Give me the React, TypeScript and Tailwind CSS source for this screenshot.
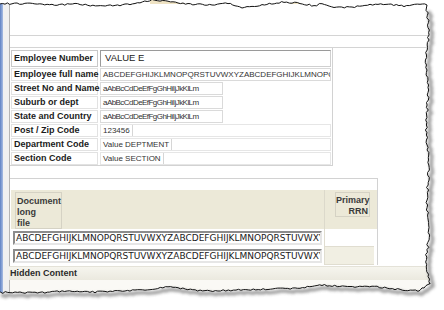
import React from "react";

type Pt = [number, number];

// seeded noise so the torn edge is the same on every render
function rng(seed: number) {
  let s = seed;
  return () => {
    s = (s * 1664525 + 1013904223) % 4294967296;
    return s / 4294967296;
  };
}

function jag(anchors: Pt[], axis: "x" | "y", amp: number, seed: number): Pt[] {
  const r = rng(seed);
  const out: Pt[] = [];
  for (let i = 0; i < anchors.length - 1; i++) {
    const [x0, y0] = anchors[i];
    const [x1, y1] = anchors[i + 1];
    const n = Math.max(1, Math.round(Math.hypot(x1 - x0, y1 - y0) / 2.5));
    for (let k = 0; k < n; k++) {
      const t = k / n;
      let x = x0 + (x1 - x0) * t;
      let y = y0 + (y1 - y0) * t;
      const j = (r() - 0.5) * amp;
      if (axis === "y") y += j;
      else x += j;
      out.push([x, y]);
    }
  }
  out.push(anchors[anchors.length - 1]);
  return out;
}

const topEdge = jag(
  [
    [-2, 3], [12, 4], [30, 3], [52, 5], [75, 4], [98, 6], [120, 5], [140, 3],
    [152, 0], [168, 1], [188, 4], [212, 5], [228, 3], [242, 8], [262, 5],
    [284, 2], [300, 3], [314, 6], [322, 3], [334, 8], [352, 7], [370, 5],
    [386, 4], [404, 6], [420, 4], [427, 5],
  ],
  "y",
  1.6,
  7,
);
const rightEdge = jag(
  [
    [427, 8], [429, 30], [426, 60], [428, 95], [426, 130], [429, 165],
    [427, 200], [429, 235], [426, 262], [430, 284],
  ],
  "x",
  2.4,
  19,
);
const bottomEdge = jag(
  [
    [430, 284], [418, 291], [395, 289], [372, 286], [350, 287], [322, 285],
    [300, 288], [268, 289], [236, 290], [205, 291], [178, 288], [168, 286],
    [150, 290], [120, 291], [95, 292], [62, 291], [35, 293], [10, 292], [-2, 293],
  ],
  "y",
  1.6,
  31,
);

const toD = (pts: Pt[]) =>
  pts.map(([x, y], i) => `${i ? "L" : "M"}${x.toFixed(1)} ${y.toFixed(1)}`).join(" ");

const paper = toD([...topEdge, ...rightEdge, ...bottomEdge]) + " Z";
const shadowLine = toD([...rightEdge, ...bottomEdge]);
const edgeLine = toD([...topEdge, ...rightEdge, ...bottomEdge]);

function TornEdge() {
  return (
    <svg className="pointer-events-none absolute inset-0" width={444} height={310}>
      <defs>
        <filter id="soft" x="-10%" y="-10%" width="120%" height="120%">
          <feGaussianBlur stdDeviation="1.8" />
        </filter>
      </defs>
      <path d={`M-5 -5H450V315H-5Z ${paper}`} fill="#ffffff" fillRule="evenodd" />
      <path
        d={shadowLine}
        transform="translate(3 3)"
        fill="none"
        stroke="#6b6b6b"
        strokeWidth={3.5}
        opacity={0.65}
        filter="url(#soft)"
      />
      <path d={edgeLine} fill="none" stroke="#111111" strokeWidth={1} />
    </svg>
  );
}

type Row = { label: string; kind: "input" | "full" | "short" | "fit"; value: string };

const rows: Row[] = [
  { label: "Employee Number", kind: "input", value: "VALUE E" },
  { label: "Employee full name", kind: "full", value: "ABCDEFGHIJKLMNOPQRSTUVWXYZABCDEFGHIJKLMNOPQRSTUVWXYZ" },
  { label: "Street No and Name", kind: "short", value: "aAbBcCdDeEfFgGhHiIjJkKlLm" },
  { label: "Suburb or dept", kind: "short", value: "aAbBcCdDeEfFgGhHiIjJkKlLm" },
  { label: "State and Country", kind: "short", value: "aAbBcCdDeEfFgGhHiIjJkKlLm" },
  { label: "Post / Zip Code", kind: "fit", value: "123456" },
  { label: "Department Code", kind: "fit", value: "Value DEPTMENT" },
  { label: "Section Code", kind: "fit", value: "Value SECTION" },
];

const longText = "ABCDEFGHIJKLMNOPQRSTUVWXYZABCDEFGHIJKLMNOPQRSTUVWXYZ";

function FormRow({ row }: { row: Row }) {
  const tall = row.kind === "input";
  return (
    <div className={`flex gap-[2px] pl-[1px] ${tall ? "h-[17px]" : "h-[13px]"}`}>
      <div
        className={`flex w-[87px] shrink-0 items-center border px-[2px] text-[9px] font-bold text-[#1b1b1b] ${
          tall ? "border-[#c8c8c8]" : "border-[#e2e2e2]"
        }`}
      >
        <span className="whitespace-nowrap">{row.label}</span>
      </div>
      {row.kind === "input" && (
        <div className="flex w-[231px] items-center border border-[#d0d0d0] border-t-[#9a9a9a] border-l-[#9a9a9a] px-[4px] text-[9.5px] text-[#222]">
          {row.value}
        </div>
      )}
      {row.kind === "full" && (
        <div className="flex w-[231px] items-center overflow-hidden border border-[#dadada] px-[2px] text-[8px] whitespace-nowrap text-[#333]">
          {row.value}
        </div>
      )}
      {row.kind === "short" && (
        <div className="flex w-[123px] items-center border border-[#dadada] px-[2px] text-[8px] tracking-[-0.55px] whitespace-nowrap text-[#333]">
          {row.value}
        </div>
      )}
      {row.kind === "fit" && (
        <div className="flex w-[231px] items-stretch border border-[#e6e6e6]">
          <div className="flex items-center border-r border-[#d6d6d6] px-[2px] text-[8px] whitespace-nowrap text-[#333]">
            {row.value}
          </div>
        </div>
      )}
    </div>
  );
}

function DataRow({ alt }: { alt: boolean }) {
  return (
    <div className="flex h-[18px]">
      <div className="flex w-[314px] items-center pl-[3px] pr-[2px]">
        <div className="h-[14px] w-full overflow-hidden border-2 border-[#8c8c8c] border-r-[#e6e6e6] border-b-[#e6e6e6] bg-white pl-[1px] font-['DejaVu_Sans',Verdana,sans-serif] text-[9px] leading-[11px] whitespace-nowrap text-[#1a1a1a]">
          {longText}
        </div>
      </div>
      <div className={`w-[50px] border-b border-l border-[#e0ddd0] ${alt ? "bg-[#f1efe3]" : "bg-white"}`} />
    </div>
  );
}

export default function App() {
  return (
    <div className="relative h-[310px] w-[444px] overflow-hidden bg-white font-['Liberation_Sans',Arial,sans-serif]">
      <div className="flex h-full">
        {/* window frame on the left */}
        <div className="w-[3px] shrink-0 bg-gradient-to-r from-[#5f82c4] to-[#a9bde3]" />
        <div className="w-[6px] shrink-0 bg-[#f1f1f1]" />

        <div className="flex flex-1 flex-col border-l border-[#b5b5b5]">
          <div className="flex h-[35px] gap-[90px] bg-white pl-[140px]">
            <div className="h-[4px] w-[50px] bg-[#efe3c4]" />
            <div className="h-[4px] w-[30px] bg-[#efe3c4]" />
          </div>
          <div className="h-[13px] border-y border-[#d4d4d4] bg-white" />

          {/* employee form */}
          <div className="flex h-[118px] w-[323px] flex-col gap-[1px] border-r border-b border-[#d2d2d2] pt-[2px]">
            {rows.map((r) => (
              <FormRow key={r.label} row={r} />
            ))}
          </div>

          {/* document grid */}
          <div className="mt-[12px] flex w-[368px] flex-col border-t border-r border-[#d2d2d2]">
            <div className="h-[11px] bg-white" />
            <div className="ml-[1px] flex h-[39px] bg-[#ece9d8] text-[9px] leading-[11px] font-bold text-[#3a3a3a]">
              <div className="w-[314px] border-r border-[#dcd9cb] pt-[2px] pl-[4px]">
                <div className="h-[37px] w-[47px] border border-[#d5d2c4] px-[1px] pt-[3px]">
                  Document
                  <br />
                  long
                  <br />
                  file
                </div>
              </div>
              <div className="flex-1 pt-[2px] pl-[10px]">
                <div className="h-[25px] w-[35px] border border-[#d5d2c4] pt-[2px] pr-[1px] text-right">
                  Primary
                  <br />
                  RRN
                </div>
              </div>
            </div>
            <DataRow alt={false} />
            <DataRow alt={true} />
          </div>

          <div className="mt-[1px] -ml-[1px] flex h-[14px] items-center border-t border-[#e4e2d8] bg-gradient-to-b from-[#f6f5ee] to-[#ebe9df] pl-[1px] text-[9px] font-bold text-[#2b2b2b]">
            Hidden Content
          </div>
          <div className="flex-1 bg-[#faf9f5]" />
        </div>
      </div>
      <TornEdge />
    </div>
  );
}
